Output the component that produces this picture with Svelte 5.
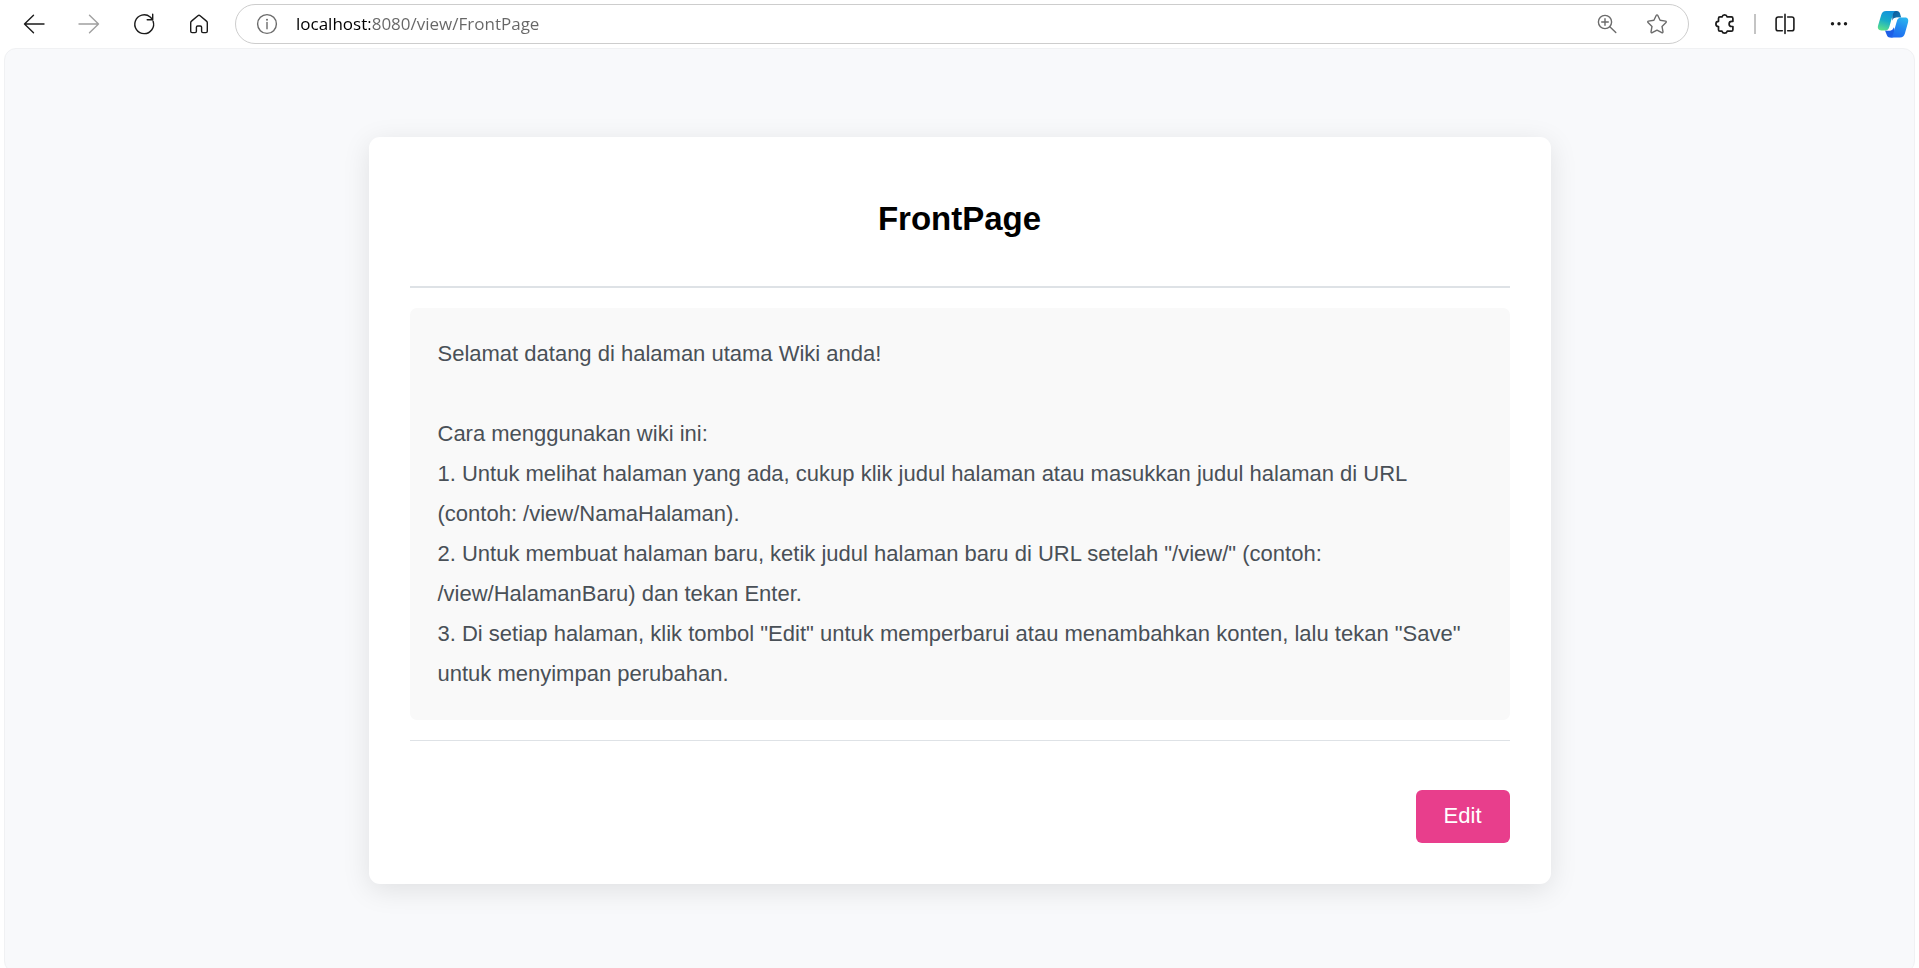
<script>
  let address = $state('localhost:8080/view/FrontPage');

  const title = 'FrontPage';
  const body = `Selamat datang di halaman utama Wiki anda!

Cara menggunakan wiki ini:
1. Untuk melihat halaman yang ada, cukup klik judul halaman atau masukkan judul halaman di URL (contoh: /view/NamaHalaman).
2. Untuk membuat halaman baru, ketik judul halaman baru di URL setelah "/view/" (contoh: /view/HalamanBaru) dan tekan Enter.
3. Di setiap halaman, klik tombol "Edit" untuk memperbarui atau menambahkan konten, lalu tekan "Save" untuk menyimpan perubahan.`;
</script>

<div class="browser">
  <header class="toolbar">
    <nav class="nav">
      <button class="tool" type="button" aria-label="Back">
        <svg width="24" height="24" viewBox="0 0 24 24"><path d="M22 12H2.5M11.5 3.2 2.5 12l9 8.8" /></svg>
      </button>
      <button class="tool" type="button" aria-label="Forward" disabled>
        <svg width="24" height="24" viewBox="0 0 24 24"><path d="M2 12h19.5M12.5 3.2l9 8.8-9 8.8" /></svg>
      </button>
      <button class="tool" type="button" aria-label="Reload">
        <svg width="24" height="24" viewBox="0 0 24 24"><path d="M21.1 9.2A9.4 9.4 0 1 1 18.2 5L20.4 7.3M20.7 2.2v5.5h-5.5" /></svg>
      </button>
      <button class="tool" type="button" aria-label="Home">
        <svg width="24" height="24" viewBox="0 0 24 24"><path d="M3.7 10.7c0-.7.3-1.2.8-1.6l6.4-5.4c.6-.5 1.6-.5 2.2 0l6.4 5.4c.5.4.8.9.8 1.6v8.5c0 .9-.5 1.4-1.4 1.4h-3c-.8 0-1.3-.5-1.3-1.3v-4c0-.8-.5-1.3-1.3-1.3h-2.6c-.8 0-1.3.5-1.3 1.3v4c0 .8-.5 1.3-1.3 1.3h-3c-.9 0-1.4-.5-1.4-1.4z" /></svg>
      </button>
    </nav>

    <div class="address">
      <button class="inline" type="button" aria-label="Site information">
        <svg width="24" height="24" viewBox="0 0 24 24"><circle cx="12" cy="12" r="9.4" /><path d="M12 10.5v6.2" /><circle class="dot" cx="12" cy="7.8" r="1" /></svg>
      </button>
      <input aria-label="Address" type="text" spellcheck="false" bind:value={address} />
      <button class="inline" type="button" aria-label="Zoom">
        <svg width="24" height="24" viewBox="0 0 24 24"><circle cx="10" cy="10" r="6.6" /><path d="m14.8 14.8 6 5.7M10 6.7v6.6M6.7 10h6.6" /></svg>
      </button>
      <button class="inline" type="button" aria-label="Add to favorites">
        <svg width="24" height="24" viewBox="0 0 24 24"><path d="M11.3 3.3c.3-.6 1.1-.6 1.4 0l2.4 5 5.5.8c.7.1.9.9.4 1.4l-4 3.9 1 5.5c.1.7-.6 1.1-1.2.8L12 18.1l-4.8 2.6c-.6.3-1.3-.1-1.2-.8l1-5.5-4-3.9c-.5-.5-.3-1.3.4-1.4l5.5-.8z" /></svg>
      </button>
    </div>

    <div class="actions">
      <div class="pair">
        <button class="tool" type="button" aria-label="Extensions">
          <svg width="24" height="24" viewBox="0 0 24 24"><path stroke-width="1.7" d="M9 4.9a2.7 2.7 0 0 1 5.2 0h4.2c1 0 1.5.5 1.5 1.5v2.9h-1.2a2.6 2.6 0 0 0 0 5.2h1.2v3.2c0 1-.5 1.5-1.5 1.5h-4.2a2.7 2.7 0 0 1-5.2 0H7c-1 0-1.5-.5-1.5-1.5v-3.2a2.6 2.6 0 0 1 0-5.2V6.4c0-1 .5-1.5 1.5-1.5z" /></svg>
        </button>
        <span class="divider"></span>
        <button class="tool" type="button" aria-label="Split screen">
          <svg width="24" height="24" viewBox="0 0 24 24"><path stroke-width="1.6" d="M12 2.4v19M9.3 5H5.2c-1.3 0-2.1.8-2.1 2.1v9.6c0 1.3.8 2.1 2.1 2.1h4.1M14.7 5h4.1c1.3 0 2.1.8 2.1 2.1v9.6c0 1.3-.8 2.1-2.1 2.1h-4.1" /></svg>
        </button>
      </div>
      <button class="tool" type="button" aria-label="More">
        <svg width="24" height="24" viewBox="0 0 24 24"><g class="dot"><circle cx="5.5" cy="11.8" r="1.7" /><circle cx="12" cy="11.8" r="1.7" /><circle cx="18.5" cy="11.8" r="1.7" /></g></svg>
      </button>
      <button class="tool" type="button" aria-label="Copilot">
        <svg width="32" height="28" viewBox="0 0 32 28">
          <defs>
            <linearGradient id="leaf" x1="0.6" y1="0" x2="0.3" y2="1"><stop offset="0" stop-color="#1292dc" /><stop offset="0.5" stop-color="#18acc8" /><stop offset="1" stop-color="#5be08a" /></linearGradient>
            <linearGradient id="wave" x1="0.7" y1="0" x2="0.3" y2="1"><stop offset="0" stop-color="#2bb3ee" /><stop offset="0.5" stop-color="#2388f0" /><stop offset="1" stop-color="#1f6bf0" /></linearGradient>
            <linearGradient id="fold" x1="0" y1="0" x2="1" y2="1"><stop offset="0" stop-color="#0d5596" /><stop offset="1" stop-color="#1583bd" /></linearGradient>
          </defs>
          <g stroke="none">
            <path fill="url(#fold)" d="M15 1h4.8c1.9 0 2.7 1 3.2 2.6l1.2 4h-4.4c-2.4 0-3.7 1-4.4 3.3z" />
            <path fill="#1d5fe6" d="M8 20.4h4.9c2 0 3.2-1.2 3.9-3.6l1.8 6.9c-.7 2.4-1.8 3.7-3.6 3.7h-2.1c-1.8 0-2.7-1-3.2-2.6z" />
            <path fill="url(#leaf)" d="M9.1 1h10.1c-1.9 0-2.7 1.4-3.3 3.3L12.3 17c-.7 2.4-1.9 3.5-4.3 3.5H4.3C1.4 20.5.3 18.5 1.1 15.6L4.2 5C5 2.3 6.4 1 9.1 1z" />
            <path fill="url(#wave)" d="M22.9 27.4H13c1.9 0 2.7-1.4 3.2-3.3l3.6-12.9c.7-2.4 1.9-3.6 4.3-3.6h3.7c2.9 0 4 2 3.2 4.9l-3.1 10.9c-.8 2.7-2.2 4-5 4z" />
            <path fill="#fff" d="M19.8 7.8c-2.6 0-3.8 1.1-4.5 3.3l-2.4 6c-.7 2-1.7 3.3-3.9 3.3h3.6c2.3 0 3.5-1.2 4.2-3.4l2.5-6c.7-2.1 1.6-3.2 3.8-3.2z" />
          </g>
        </svg>
      </button>
    </div>
  </header>

  <main class="page">
    <article class="card">
      <h1>{title}</h1>
      <div class="content">{body}</div>
      <footer>
        <a class="edit" href="/edit/FrontPage">Edit</a>
      </footer>
    </article>
  </main>
</div>

<style>
  :global(body) {
    margin: 0;
    background: #fff;
  }

  .browser {
    display: flex;
    flex-direction: column;
    min-height: 100vh;
    overflow: hidden;
    font-family: 'Liberation Sans', Arial, sans-serif;
  }

  .toolbar {
    display: flex;
    align-items: center;
    gap: 16px;
    height: 48px;
    padding: 0 6px 0 14px;
  }

  .nav {
    display: flex;
    gap: 15px;
  }

  .actions {
    display: flex;
    gap: 14px;
  }

  .pair {
    display: flex;
    align-items: center;
    gap: 9px;
  }

  .divider {
    width: 2px;
    height: 20px;
    background: #c4c4c4;
  }

  .tool,
  .inline {
    display: flex;
    align-items: center;
    justify-content: center;
    padding: 0;
    border: 0;
    background: none;
    color: #1b1b1b;
  }

  .tool {
    width: 40px;
    height: 40px;
  }

  .tool:disabled {
    color: #a0a0a0;
  }

  .inline {
    width: 24px;
    height: 24px;
    color: #6b6b6b;
  }

  svg {
    fill: none;
    stroke: currentColor;
    stroke-width: 1.4;
    stroke-linecap: round;
    stroke-linejoin: round;
  }

  .dot {
    fill: currentColor;
    stroke: none;
  }

  .address {
    display: flex;
    flex: 1;
    align-items: center;
    gap: 26px;
    box-sizing: border-box;
    min-width: 0;
    height: 40px;
    padding: 0 19px;
    border: 1px solid #cdcdcd;
    border-radius: 20px;
  }

  .address input {
    flex: 1;
    min-width: 0;
    margin-left: -9px;
    padding: 0;
    border: 0;
    outline: 0;
    color: #666;
    font: 17px/24px 'Open Sans', 'Segoe UI', sans-serif;
    background: linear-gradient(90deg, #000 74px, #666 74px);
    background-clip: text;
    -webkit-text-fill-color: transparent;
  }

  .page {
    flex: 1;
    margin: 0 4px -5px;
    padding: 88px 24px;
    border: 1px solid #f0f1f3;
    border-radius: 12px;
    background: #f8f9fb;
  }

  .card {
    box-sizing: border-box;
    max-width: 1182px;
    margin: 0 auto;
    padding: 41px;
    border-radius: 11px;
    background: #fff;
    box-shadow: 0 6px 28px rgba(0, 0, 0, 0.1);
  }

  h1 {
    margin: 0 0 20px;
    padding: 22px 0 48px;
    border-bottom: 2px solid #dee2e6;
    color: #000;
    font-size: 33px;
    line-height: 38px;
    text-align: center;
  }

  .content {
    padding: 26px 28px;
    border-radius: 7px;
    background: #f9f9f9;
    color: #495057;
    font-size: 22px;
    line-height: 40px;
    white-space: pre-wrap;
  }

  footer {
    display: flex;
    justify-content: flex-end;
    margin-top: 20px;
    padding-top: 49px;
    border-top: 1px solid #dee2e6;
  }

  .edit {
    padding: 13px 28px 15px;
    border-radius: 6px;
    background: #e83e8c;
    color: #fff;
    font-size: 22px;
    line-height: 25px;
    text-decoration: none;
  }
</style>
